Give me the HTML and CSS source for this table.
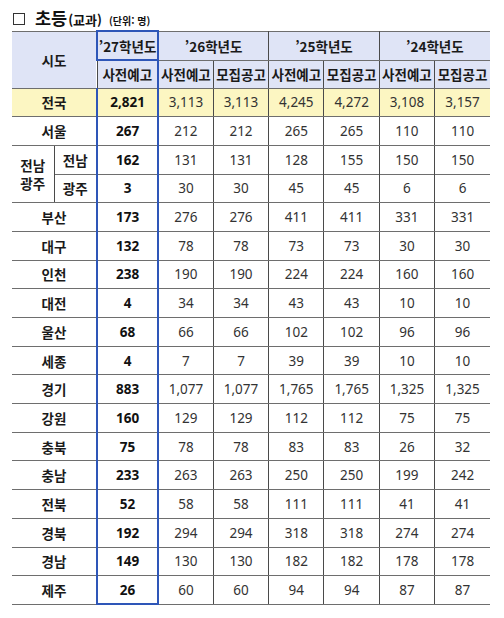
FILE: index.html
```html
<!DOCTYPE html>
<html lang="ko">
<head>
    <meta charset="UTF-8">
    <meta name="viewport" content="width=device-width, initial-scale=1.0">
    <title>초등(교과)</title>
    <link rel="stylesheet" href="styles.css">
</head>
<body>
    <div class="page">
        <h2 class="title">
            <span class="box"></span>
            <span class="main">초등</span><span class="sub">(교과)</span>
            <span class="unit">(단위: 명)</span>
        </h2>
        <table class="stats">
            <colgroup>
                <col class="c-a"><col class="c-b"><col class="c-27">
                <col class="c-n"><col class="c-n"><col class="c-n">
                <col class="c-n"><col class="c-n"><col class="c-n">
            </colgroup>
            <thead>
                <tr class="h1">
                    <th colspan="2" rowspan="2">시도</th>
                    <th class="cur">’27학년도</th>
                    <th colspan="2">’26학년도</th>
                    <th colspan="2">’25학년도</th>
                    <th colspan="2">’24학년도</th>
                </tr>
                <tr class="h2">
                    <th class="cur">사전예고</th>
                    <th>사전예고</th><th>모집공고</th>
                    <th>사전예고</th><th>모집공고</th>
                    <th>사전예고</th><th>모집공고</th>
                </tr>
            </thead>
            <tbody>
                <tr class="total">
                    <td colspan="2" class="name">전국</td>
                    <td class="cur">2,821</td>
                    <td>3,113</td><td>3,113</td><td>4,245</td><td>4,272</td><td>3,108</td><td>3,157</td>
                </tr>
                <tr>
                    <td colspan="2" class="name">서울</td>
                    <td class="cur">267</td>
                    <td>212</td><td>212</td><td>265</td><td>265</td><td>110</td><td>110</td>
                </tr>
                <tr class="dot">
                    <td rowspan="2" class="name group"><div>전남</div><div>광주</div></td>
                    <td class="name">전남</td>
                    <td class="cur">162</td>
                    <td>131</td><td>131</td><td>128</td><td>155</td><td>150</td><td>150</td>
                </tr>
                <tr>
                    <td class="name">광주</td>
                    <td class="cur">3</td>
                    <td>30</td><td>30</td><td>45</td><td>45</td><td>6</td><td>6</td>
                </tr>
                <tr>
                    <td colspan="2" class="name">부산</td>
                    <td class="cur">173</td>
                    <td>276</td><td>276</td><td>411</td><td>411</td><td>331</td><td>331</td>
                </tr>
                <tr>
                    <td colspan="2" class="name">대구</td>
                    <td class="cur">132</td>
                    <td>78</td><td>78</td><td>73</td><td>73</td><td>30</td><td>30</td>
                </tr>
                <tr>
                    <td colspan="2" class="name">인천</td>
                    <td class="cur">238</td>
                    <td>190</td><td>190</td><td>224</td><td>224</td><td>160</td><td>160</td>
                </tr>
                <tr>
                    <td colspan="2" class="name">대전</td>
                    <td class="cur">4</td>
                    <td>34</td><td>34</td><td>43</td><td>43</td><td>10</td><td>10</td>
                </tr>
                <tr>
                    <td colspan="2" class="name">울산</td>
                    <td class="cur">68</td>
                    <td>66</td><td>66</td><td>102</td><td>102</td><td>96</td><td>96</td>
                </tr>
                <tr>
                    <td colspan="2" class="name">세종</td>
                    <td class="cur">4</td>
                    <td>7</td><td>7</td><td>39</td><td>39</td><td>10</td><td>10</td>
                </tr>
                <tr>
                    <td colspan="2" class="name">경기</td>
                    <td class="cur">883</td>
                    <td>1,077</td><td>1,077</td><td>1,765</td><td>1,765</td><td>1,325</td><td>1,325</td>
                </tr>
                <tr>
                    <td colspan="2" class="name">강원</td>
                    <td class="cur">160</td>
                    <td>129</td><td>129</td><td>112</td><td>112</td><td>75</td><td>75</td>
                </tr>
                <tr>
                    <td colspan="2" class="name">충북</td>
                    <td class="cur">75</td>
                    <td>78</td><td>78</td><td>83</td><td>83</td><td>26</td><td>32</td>
                </tr>
                <tr>
                    <td colspan="2" class="name">충남</td>
                    <td class="cur">233</td>
                    <td>263</td><td>263</td><td>250</td><td>250</td><td>199</td><td>242</td>
                </tr>
                <tr>
                    <td colspan="2" class="name">전북</td>
                    <td class="cur">52</td>
                    <td>58</td><td>58</td><td>111</td><td>111</td><td>41</td><td>41</td>
                </tr>
                <tr>
                    <td colspan="2" class="name">경북</td>
                    <td class="cur">192</td>
                    <td>294</td><td>294</td><td>318</td><td>318</td><td>274</td><td>274</td>
                </tr>
                <tr>
                    <td colspan="2" class="name">경남</td>
                    <td class="cur">149</td>
                    <td>130</td><td>130</td><td>182</td><td>182</td><td>178</td><td>178</td>
                </tr>
                <tr class="last">
                    <td colspan="2" class="name">제주</td>
                    <td class="cur">26</td>
                    <td>60</td><td>60</td><td>94</td><td>94</td><td>87</td><td>87</td>
                </tr>
            </tbody>
        </table>
    </div>
</body>
</html>
```

FILE: styles.css
```css
body {
    margin: 0;
    background: #ffffff;
    font-family: "Noto Sans", "Noto Sans CJK KR", sans-serif;
    color: #222;
}
.page {
    padding: 5px 14px 0 12px;
}
.title {
    display: flex;
    align-items: baseline;
    margin: 0;
    height: 25px;
    font-family: "Noto Sans CJK KR", sans-serif;
    font-weight: bold;
    color: #111;
}
.box {
    display: inline-block;
    width: 10px;
    height: 10px;
    border: 1px solid #333;
    margin: 0 10px 0 1px;
    align-self: center;
    position: relative;
    top: 1px;
}
.main {
    font-size: 17.5px;
}
.sub {
    font-size: 13px;
    margin-left: 1px;
}
.unit {
    font-size: 10px;
    margin-left: 7px;
}
.stats {
    border-collapse: collapse;
    table-layout: fixed;
    width: 478px;
    font-size: 13.5px;
}
.c-a { width: 42px; }
.c-b { width: 43px; }
.c-27 { width: 61px; }
.c-n { width: 55.3px; }
.stats th,
.stats td {
    padding: 0;
    text-align: center;
    border-top: 1px solid #6e6e6e;
    border-bottom: 1px solid #6e6e6e;
    border-left: 1px solid #4a4a4a;
    border-right: 1px solid #4a4a4a;
    white-space: nowrap;
    overflow: hidden;
}
.stats tr > :first-child {
    border-left: none;
}
.stats tr > :last-child {
    border-right: none;
}
.stats .group {
    border-left: none;
}
.stats th {
    background: #dfe4f6;
    font-family: "Noto Sans CJK KR", sans-serif;
    font-weight: bold;
    font-size: 13.5px;
    color: #1a1a1a;
}
.h1 { height: 29px; }
.h2 { height: 28px; }
.stats tbody tr {
    height: 28.7px;
}
.stats td {
    color: #333;
}
.stats td.name {
    font-family: "Noto Sans CJK KR", sans-serif;
    font-weight: bold;
    font-size: 13.5px;
    color: #1a1a1a;
}
.stats td.group {
    line-height: 18px;
}
.stats .cur {
    font-weight: bold;
    color: #111;
    border-left: 2px solid #2e56b8;
    border-right: 2px solid #2e56b8;
}
.stats th.cur {
    border-top: 2px solid #2e56b8;
    color: #1a1a1a;
}
.stats .last .cur {
    border-bottom: 2px solid #2e56b8;
}
.total td {
    background: #fcf6c2;
}
.dot td {
    border-bottom: 1px dotted #555;
}
.dot td.group {
    border-bottom: 1px solid #6e6e6e;
}
```
